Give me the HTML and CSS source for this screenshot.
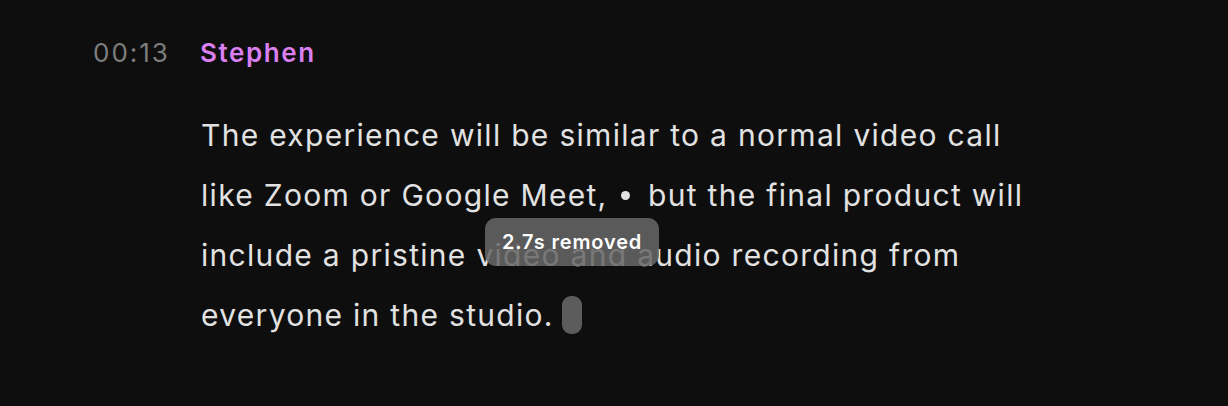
FILE: index.html
```html
<!DOCTYPE html>
<html>
<head>
<meta charset="utf-8">
<link rel="stylesheet" href="styles.css">
</head>
<body>
<div class="segment">
  <div class="time">00:13</div>
  <div class="content">
    <div class="speaker">Stephen</div>
    <p class="transcript">The experience will be similar to a normal video call like Zoom or Google Meet, <span class="dot"></span> but the final product will include a pristine video and audio recording from everyone in the studio. <span class="gap"></span><span class="tooltip">2.7s removed</span></p>
  </div>
</div>
</body>
</html>
```
FILE: styles.css
```css
html, body {
  margin: 0;
  padding: 0;
  background: #0e0e0e;
  width: 1228px;
  height: 406px;
  overflow: hidden;
}
body {
  font-family: Inter, "Noto Sans", sans-serif;
}
.segment {
  display: grid;
  grid-template-columns: 107px 840px;
  padding: 34px 0 0 93px;
}
.time {
  color: #7d7d7d;
  font-size: 26px;
  letter-spacing: 2px;
  line-height: 38px;
}
.speaker {
  color: #d97ff0;
  font-size: 26px;
  font-weight: 600;
  letter-spacing: 1.6px;
  line-height: 38px;
}
.transcript {
  position: relative;
  margin: 33px 0 0 1px;
  color: #e2e2e2;
  font-size: 30px;
  letter-spacing: 1.3px;
  line-height: 60px;
}
.dot {
  display: inline-block;
  width: 9px;
  height: 9px;
  border-radius: 50%;
  background: #e2e2e2;
  vertical-align: 6px;
  margin: 0 8px 0 4px;
}
.gap {
  display: inline-block;
  width: 20px;
  height: 38px;
  margin-left: -2px;
  border-radius: 9px;
  background: #5c5c5c;
  vertical-align: -8px;
}
.tooltip {
  position: absolute;
  left: 284px;
  top: 113px;
  height: 48px;
  padding: 0 17px;
  border-radius: 11px;
  background: rgba(103, 103, 103, 0.86);
  color: #ffffff;
  font-size: 20px;
  font-weight: 600;
  letter-spacing: 0.85px;
  line-height: 48px;
}
```
